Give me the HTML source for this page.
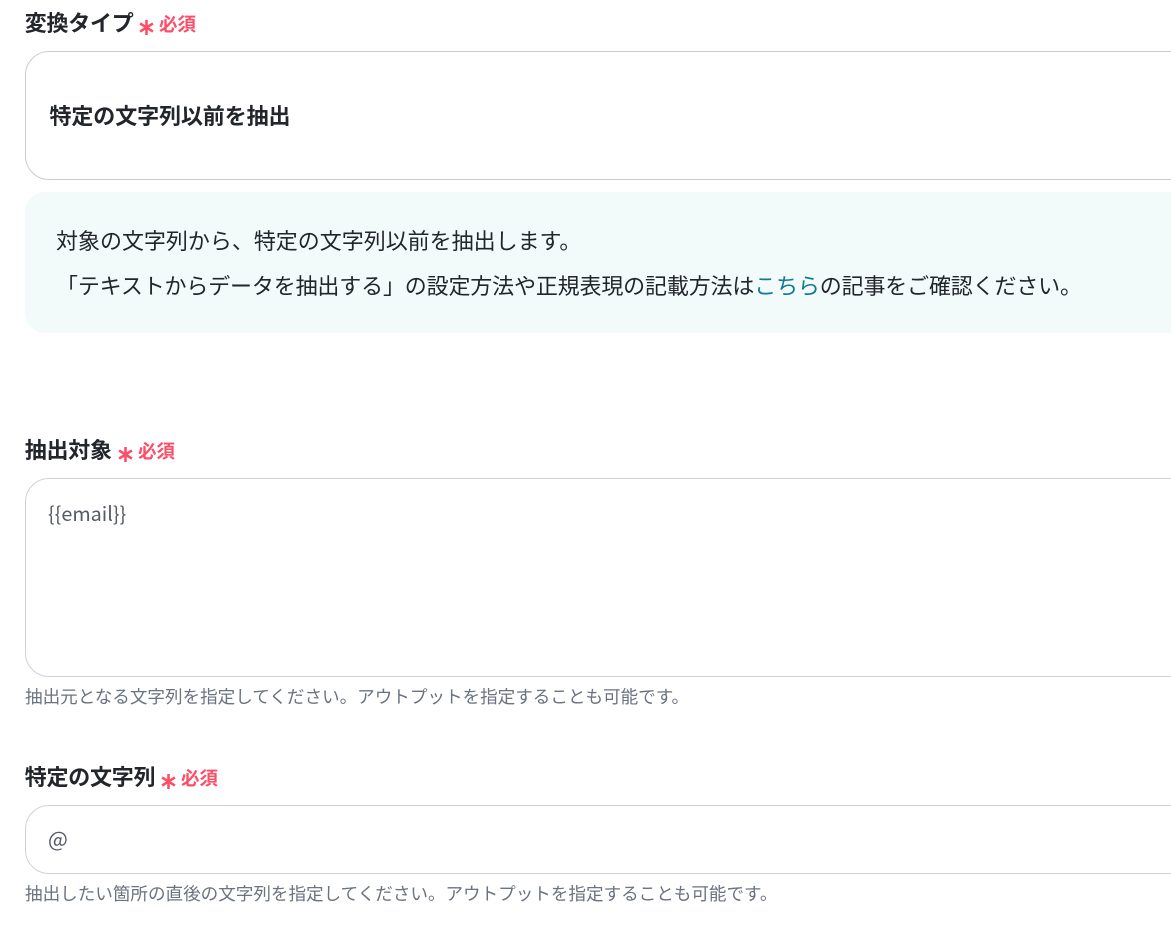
<!DOCTYPE html>
<html lang="ja"><head><meta charset="utf-8"><style>
html,body{margin:0;padding:0;width:1171px;height:927px;overflow:hidden;background:#fff}
body{position:relative;font-family:"Liberation Sans","Noto Sans CJK JP",sans-serif;color:#1f2328}
.t{position:absolute;white-space:nowrap;font-family:"Noto Sans CJK JP",sans-serif}
.l{font-size:22px;font-weight:700;line-height:28px;color:#22252a;letter-spacing:-.25px}
.r{font-size:18.5px;font-weight:700;color:#ff4d67;line-height:24px}
.s{position:absolute;width:15px;height:15px}
.b{position:absolute;left:25px;width:1200px;box-sizing:border-box;border:1px solid #cdd1dc;border-radius:24px;background:#fff}
.h{font-size:17.6px;color:#6b7280;line-height:24px;letter-spacing:-.03px}
.p{font-size:22px;line-height:30px;color:#22252a}
.v{font-size:19.8px;color:#555a64;line-height:28px}
</style></head><body>
<svg width="0" height="0" style="position:absolute"><defs><g id="a" stroke="#ff4d67" stroke-width="2.4" fill="none"><path d="M7 0V14M1 3.2L13 10.8M13 3.2L1 10.8"/></g></defs></svg>
<div class="t l" style="left:24.700px;top:8px">変換タイプ</div>
<svg class="s" style="left:139px;top:20px" viewBox="0 0 14 14"><use href="#a"/></svg>
<div class="t r" style="left:159px;top:12px">必須</div>
<div class="b" style="top:51px;height:129px;border-color:#cccccc"></div>
<div class="t l" style="left:49.500px;top:101px;letter-spacing:-.1px">特定の文字列以前を抽出</div>
<div style="position:absolute;left:25px;top:192px;width:1200px;height:141px;background:#f2fbfa;border-radius:20px"></div>
<div class="t p" style="left:56px;top:225px;letter-spacing:-.02px">対象の文字列から、特定の文字列以前を抽出します。</div>
<div class="t p" style="left:56px;top:270px;letter-spacing:-.16px">「テキストからデータを抽出する」の設定方法や正規表現の記載方法は<span style="color:#0e7a96">こちら</span>の記事をご確認ください。</div>
<div class="t l" style="left:24.700px;top:435px">抽出対象</div>
<svg class="s" style="left:117.500px;top:446.500px" viewBox="0 0 14 14"><use href="#a"/></svg>
<div class="t r" style="left:138px;top:439px">必須</div>
<div class="b" style="top:478px;height:199px"></div>
<div class="t v" style="left:48px;top:499px">{{email}}</div>
<div class="t h" style="left:25px;top:685px">抽出元となる文字列を指定してください。アウトプットを指定することも可能です。</div>
<div class="t l" style="left:24.700px;top:762px">特定の文字列</div>
<svg class="s" style="left:161px;top:773.500px" viewBox="0 0 14 14"><use href="#a"/></svg>
<div class="t r" style="left:181px;top:766px">必須</div>
<div class="b" style="top:805px;height:69px"></div>
<div class="t v" style="left:48px;top:825px;font-size:21px">@</div>
<div class="t h" style="left:25px;top:882px">抽出したい箇所の直後の文字列を指定してください。アウトプットを指定することも可能です。</div>
</body></html>
